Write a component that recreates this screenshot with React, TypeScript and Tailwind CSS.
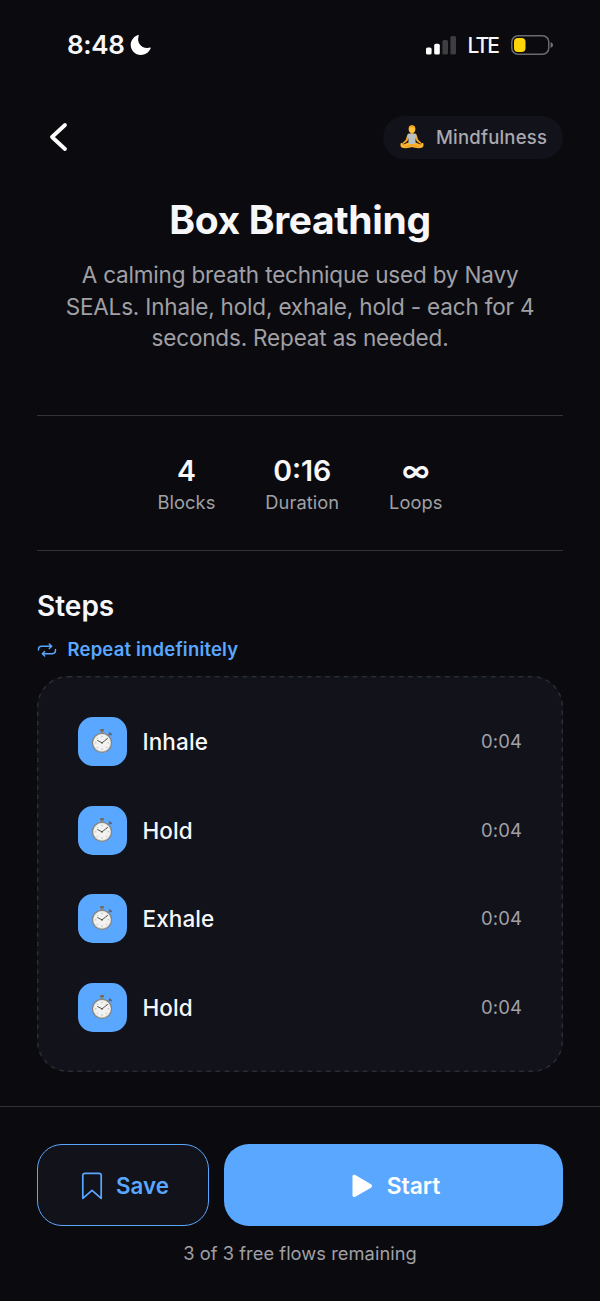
interface Step {
  name: string;
  time: string;
}

const STEPS: Step[] = [
  { name: 'Inhale', time: '0:04' },
  { name: 'Hold', time: '0:04' },
  { name: 'Exhale', time: '0:04' },
  { name: 'Hold', time: '0:04' },
];

const STATS = [
  { value: '4', label: 'Blocks' },
  { value: '0:16', label: 'Duration' },
  { value: '∞', label: 'Loops' },
];

function StatusBar() {
  return (
    <div className="flex h-[90px] shrink-0 items-center justify-between pr-[47px] pl-[67px]">
      <div className="flex items-center gap-[5px]">
        <span className="text-[26px] leading-none font-semibold tracking-[-0.35px]">8:48</span>
        <svg width="21" height="22" viewBox="0 0 21 22" fill="#fff" aria-hidden>
          <path d="M7.4 1.2C8.5.7 9 1.2 8.6 2.2C6.6 8.2 10.9 14.2 17.6 13.9C18.6 13.8 19.2 13.6 19.8 13.5C20.6 13.4 20.9 14 20.5 14.8C18.7 18.6 15 21 10.8 21C5.2 21 .7 16.6.7 11.1C.7 6.7 3.4 2.8 7.4 1.2Z" />
        </svg>
      </div>
      <div className="flex items-center">
        <svg width="30" height="20" viewBox="0 0 30 20" aria-hidden>
          <rect x="0" y="12.5" width="5.6" height="7" rx="1.6" fill="#fff" />
          <rect x="8.2" y="8.7" width="5.6" height="10.8" rx="1.6" fill="#fff" />
          <rect x="16.4" y="5" width="5.6" height="14.5" rx="1.6" fill="#3d3d42" />
          <rect x="24.4" y="1" width="5.6" height="18.5" rx="1.6" fill="#3d3d42" />
        </svg>
        <span className="ml-[11px] pt-px text-[21px] leading-none font-medium tracking-[-1.9px]">LTE</span>
        <svg className="ml-[13px]" width="42" height="20" viewBox="0 0 42 20" aria-hidden>
          <rect x="0.8" y="0.8" width="37" height="18.4" rx="6.2" fill="none" stroke="#6b6b6f" strokeWidth="1.5" />
          <rect x="3" y="3" width="11.5" height="14" rx="4" fill="#ffd60a" />
          <path d="M39.6 7.2C41.4 7.8 42 8.9 42 10C42 11.1 41.4 12.2 39.6 12.8Z" fill="#77777b" />
        </svg>
      </div>
    </div>
  );
}

function Meditator() {
  return (
    <svg width="24" height="24" viewBox="0 0 24 24" aria-hidden>
      <path d="M8.8 8.4C7 9 6.6 12.4 5.8 14.8L2.4 17.9L3.6 19L7.3 16.2L9 12.5Z" fill="#f5a623" />
      <path d="M15.2 8.4C17 9 17.4 12.4 18.2 14.8L21.6 17.9L20.4 19L16.7 16.2L15 12.5Z" fill="#f5a623" />
      <path d="M1 18C.2 18.6.2 21.6 1.6 22.6C5 23.6 9 23.2 12 22C15 23.2 19 23.6 22.4 22.6C23.8 21.6 23.8 18.6 23 18C21.8 17.6 21 18.4 20.4 19.4L15.8 17.6H8.2L3.6 19.4C3 18.4 2.2 17.6 1 18Z" fill="#fdb52e" />
      <path d="M5 21.4C8 21.4 10.2 20.8 12 19.8C13.8 20.8 16 21.4 19 21.4" stroke="#dc8a20" strokeWidth=".6" fill="none" />
      <path d="M7.9 9.1C9 8.5 10.4 8.3 12 8.3C13.6 8.3 15 8.5 16.1 9.1L16.6 12.6L15.6 13.2L15.5 18.4C13.5 19.3 10.5 19.3 8.5 18.4L8.4 13.2L7.4 12.6Z" fill="#b9c0c2" />
      <path d="M10.6 6.5H13.4V8.5C13 9.6 11 9.6 10.6 8.5Z" fill="#ee9d1c" />
      <ellipse cx="12" cy="4.2" rx="3.3" ry="3.8" fill="#ffc23a" />
      <path d="M8.7 3.8C8.5 1.2 10 .2 12 .2C14 .2 15.5 1.2 15.3 3.8C14.6 1.9 9.4 1.9 8.7 3.8Z" fill="#f0a51f" />
    </svg>
  );
}

function Stopwatch() {
  return (
    <svg width="24" height="26" viewBox="0 0 24 26" className="mr-[1.5px] mb-px" aria-hidden>
      <path d="M18.2 7.8L20.4 5.6" stroke="#6f6a62" strokeWidth="1.3" />
      <path d="M19.2 4.6L21.8 6.9" stroke="#5b5f66" strokeWidth="1.4" />
      <rect x="10.8" y="2.5" width="2.4" height="4" fill="#8b8677" />
      <rect x="10" y="1" width="4" height="2.2" rx=".8" fill="#716c60" />
      <circle cx="12" cy="14.8" r="9.6" fill="#d9d9d9" stroke="#85817a" strokeWidth="1.1" />
      <circle cx="12" cy="14.8" r="8.2" fill="#f2f2f0" />
      <path
        d="M12 7.8V9.2M12 20.4V21.8M5 14.8H6.4M17.6 14.8H19M7 9.8L8 10.8M17 9.8L16 10.8M7 19.8L8 18.8M17 19.8L16 18.8"
        stroke="#a0a0a0"
        strokeWidth=".8"
      />
      <path d="M7.2 12.4L12 14.8L17.8 10.4" stroke="#4a4a4a" strokeWidth=".9" fill="none" />
      <circle cx="12" cy="14.8" r=".9" fill="#4a4a4a" />
    </svg>
  );
}

function StepRow({ step }: { step: Step }) {
  return (
    <div className="flex h-[88.6px] items-center">
      <span className="flex size-[49px] items-center justify-center rounded-[15px] bg-[#5aa7ff]">
        <Stopwatch />
      </span>
      <span className="ml-[15.5px] flex-1 pt-px text-[22.5px] font-medium tracking-[0.1px]">{step.name}</span>
      <span className="pt-px text-[18.5px] tracking-[0.1px] text-[#a0a0a6]">{step.time}</span>
    </div>
  );
}

export default function App() {
  return (
    <div className="flex h-[1301px] w-[600px] flex-col overflow-hidden bg-[#0b0b0f] font-['Inter',sans-serif] whitespace-nowrap text-[#f7f7fa]">
      <StatusBar />

      <header className="flex h-[94px] items-center justify-between pr-[37px] pl-[48px]">
        <svg width="22" height="32" viewBox="0 0 22 32" fill="none" aria-hidden>
          <path d="M17 4L4 16L17 28" stroke="#fff" strokeWidth="3.8" strokeLinecap="round" strokeLinejoin="round" />
        </svg>
        <div className="flex h-[43px] w-[180px] items-center rounded-full bg-[#11121a] pl-[17px]">
          <Meditator />
          <span className="ml-[12px] pt-[2px] text-[18.5px] font-medium tracking-[0.2px] text-[#a9a9af]">Mindfulness</span>
        </div>
      </header>

      <h1 className="mt-[12px] text-center text-[39px] leading-[48px] font-bold tracking-[-0.35px]">Box Breathing</h1>
      <p className="mt-[15px] text-center text-[22.5px] leading-[31.5px] tracking-[-0.17px] text-[#a0a0a6]">
        A calming breath technique used by Navy
        <br />
        SEALs. Inhale, hold, exhale, hold - each for 4
        <br />
        seconds. Repeat as needed.
      </p>

      <section className="mx-[37px] mt-[61.5px] flex h-[136px] justify-center gap-[50px] border-y border-[#343438] pt-[37px]">
        {STATS.map((stat) => (
          <div key={stat.label} className="flex flex-col items-center">
            <span className="text-[28.5px] leading-[36px] font-semibold">{stat.value}</span>
            <span className="text-[18.3px] leading-[26px] tracking-[0.05px] text-[#a0a0a6]">{stat.label}</span>
          </div>
        ))}
      </section>

      <section className="px-[37px] pt-[36.5px]">
        <h2 className="text-[28px] leading-[36px] font-semibold">Steps</h2>
        <div className="mt-[13px] flex h-[26px] items-center text-[#5aa7ff]">
          <svg width="20" height="14" viewBox="0 0 20 14" fill="none" stroke="currentColor" strokeWidth="1.4" strokeLinecap="round" strokeLinejoin="round" aria-hidden>
            <path d="M1.5 7V6.2C1.5 4.3 2.8 3.2 4.6 3.2H14.5M12.3.9L14.7 3.2L12.3 5.5" />
            <path d="M18.5 6.5V7.6C18.5 9.5 17.2 10.7 15.4 10.7H5.5M7.7 8.4L5.3 10.7L7.7 13" />
          </svg>
          <span className="ml-[10.5px] text-[18.5px] font-semibold tracking-[0.18px]">Repeat indefinitely</span>
        </div>
        <div className="relative mt-[13px] h-[396px] rounded-[31px] bg-[#11121a] px-[41px] pt-[21.8px]">
          {/* outline drawn by hand, css dashes are too short at this width */}
          <svg className="absolute inset-0" width="526" height="396" fill="none" aria-hidden>
            <rect x=".75" y=".75" width="524.5" height="394.5" rx="30" stroke="#2b2c35" strokeWidth="1.5" strokeDasharray="4.6 4.6" />
          </svg>
          {STEPS.map((step, i) => (
            <StepRow key={i} step={step} />
          ))}
        </div>
      </section>

      <footer className="mt-[34px] flex flex-1 flex-col border-t border-[#343438] px-[37px] pt-[37px]">
        <div className="flex h-[82px] gap-[15px]">
          <button className="flex w-[172px] items-center justify-center rounded-[25px] border-[1.5px] border-[#5aa7ff] bg-[#11121a] pt-[2px] text-[#5aa7ff]">
            <svg width="22" height="28" viewBox="0 0 22 28" fill="none" aria-hidden>
              <path d="M1.8 26.4V3.6C1.8 2.2 2.6 1.4 4 1.4H18C19.4 1.4 20.2 2.2 20.2 3.6V26.4L11 18.3Z" stroke="currentColor" strokeWidth="1.7" strokeLinejoin="round" />
            </svg>
            <span className="-mr-[4px] ml-[13px] pt-px text-[22.3px] font-semibold">Save</span>
          </button>
          <button className="flex flex-1 items-center justify-center rounded-[25px] bg-[#5aa7ff] pt-[2px] pl-[5px] text-white">
            <svg width="21" height="24" viewBox="0 0 21 24" fill="currentColor" aria-hidden>
              <path d="M.5 2.5C.5 1 2 .3 3.3 1L19 10.2C20.3 11 20.3 13 19 13.8L3.3 22.8C2 23.5.5 22.8.5 21.3Z" />
            </svg>
            <span className="ml-[14px] pt-px text-[22.8px] font-semibold">Start</span>
          </button>
        </div>
        <p className="mt-[14px] text-center text-[18.3px] leading-[26px] tracking-[0.05px] text-[#a0a0a6]">
          3 of 3 free flows remaining
        </p>
      </footer>
    </div>
  );
}
